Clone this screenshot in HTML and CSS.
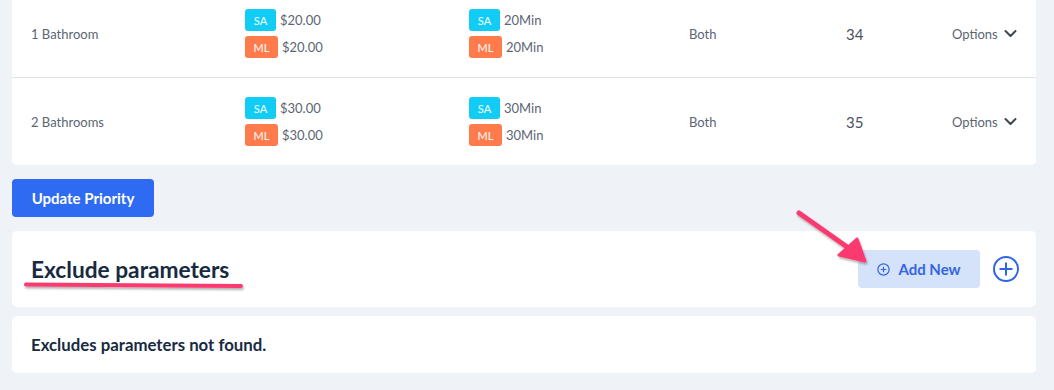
FILE: index.html
```html
<!DOCTYPE html>
<html>
<head>
    <title>Services</title>
    <link rel="stylesheet" href="styles.css">
</head>
<body>
    <div class="page">
        <div class="table-card">
            <div class="row">
                <div class="cell">1 Bathroom</div>
                <div class="cell stack">
                    <div class="tag-line"><span class="tag sa">SA</span>$20.00</div>
                    <div class="tag-line"><span class="tag ml">ML</span>$20.00</div>
                </div>
                <div class="cell stack">
                    <div class="tag-line"><span class="tag sa">SA</span>20Min</div>
                    <div class="tag-line"><span class="tag ml">ML</span>20Min</div>
                </div>
                <div class="cell">Both</div>
                <div class="cell num">34</div>
                <div class="cell options">Options
                    <svg width="13" height="9" viewBox="0 0 13 9"><path d="M1.5 2l5 5 5-5" fill="none" stroke="#3b4452" stroke-width="2" stroke-linecap="round" stroke-linejoin="round"/></svg>
                </div>
            </div>
            <div class="row">
                <div class="cell">2 Bathrooms</div>
                <div class="cell stack">
                    <div class="tag-line"><span class="tag sa">SA</span>$30.00</div>
                    <div class="tag-line"><span class="tag ml">ML</span>$30.00</div>
                </div>
                <div class="cell stack">
                    <div class="tag-line"><span class="tag sa">SA</span>30Min</div>
                    <div class="tag-line"><span class="tag ml">ML</span>30Min</div>
                </div>
                <div class="cell">Both</div>
                <div class="cell num">35</div>
                <div class="cell options">Options
                    <svg width="13" height="9" viewBox="0 0 13 9"><path d="M1.5 2l5 5 5-5" fill="none" stroke="#3b4452" stroke-width="2" stroke-linecap="round" stroke-linejoin="round"/></svg>
                </div>
            </div>
        </div>

        <div><button class="btn-primary">Update Priority</button></div>

        <div class="card header-card">
            <h2>Exclude parameters</h2>
            <div class="actions">
                <button class="btn-soft">
                    <svg width="13" height="13" viewBox="0 0 13 13"><circle cx="6.5" cy="6.5" r="5.6" fill="none" stroke="#3566e0" stroke-width="1.2"/><path d="M6.5 3.7v5.6M3.7 6.5h5.6" stroke="#3566e0" stroke-width="1.2"/></svg>
                    Add New
                </button>
                <svg class="plus-big" width="28" height="28" viewBox="0 0 28 28"><circle cx="14" cy="14" r="12" fill="none" stroke="#2f66e6" stroke-width="2"/><path d="M14 7.5v13M7.5 14h13" stroke="#2f66e6" stroke-width="2"/></svg>
            </div>
        </div>

        <div class="card empty-card">Excludes parameters not found.</div>
    </div>

    <svg class="marks" width="1054" height="390" viewBox="0 0 1054 390">
        <defs>
            <filter id="sh" x="-20%" y="-50%" width="140%" height="200%">
                <feDropShadow dx="1" dy="2" stdDeviation="1.2" flood-color="#000" flood-opacity="0.3"/>
            </filter>
        </defs>
        <g filter="url(#sh)" fill="#fb3a6f" stroke="#fb3a6f" stroke-linecap="round" stroke-linejoin="round">
            <path d="M26 284.5 L241 286" stroke-width="4" fill="none"/>
            <path d="M799 213 L850 249" stroke-width="5" fill="none"/>
            <path d="M839 255 L865 261 L857 239 Z" stroke-width="3"/>
        </g>
    </svg>
</body>
</html>
```

FILE: styles.css
```css
body {
    margin: 0;
    font-family: Lato, "Open Sans", sans-serif;
    background-color: #eff3f8;
    color: #5b6573;
}
.page {
    display: flex;
    flex-direction: column;
    gap: 14px;
    padding: 0 18px 0 12px;
    margin-top: -10px;
}
.table-card {
    background: #ffffff;
    border-radius: 0 0 5px 5px;
}
.row {
    display: grid;
    grid-template-columns: 214px 224px 220px 157px 106px 1fr;
    align-items: center;
    height: 87px;
    padding-left: 19px;
    font-size: 13px;
    border-bottom: 1px solid #dfe3ea;
}
.row:last-child {
    border-bottom: none;
}
.stack {
    display: flex;
    flex-direction: column;
    gap: 5px;
}
.tag-line {
    display: flex;
    align-items: center;
    gap: 4px;
    font-size: 13px;
}
.tag {
    display: inline-flex;
    align-items: center;
    justify-content: center;
    height: 22px;
    padding: 0 7px;
    border-radius: 3px;
    color: #ffffff;
    font-size: 11px;
}
.tag.sa {
    background: #11cdf6;
    min-width: 17px;
}
.tag.ml {
    background: #ff7b4c;
    min-width: 19px;
}
.num {
    font-size: 15px;
    color: #4a5260;
}
.options {
    display: flex;
    align-items: center;
    gap: 6px;
}
.btn-primary {
    font-family: inherit;
    background-color: #2f6bf2;
    color: #ffffff;
    font-weight: bold;
    font-size: 15px;
    height: 38px;
    width: 142px;
    border: none;
    border-radius: 4px;
}
.card {
    background: #ffffff;
    border-radius: 5px;
    padding: 0 16px 0 19px;
}
.header-card {
    display: flex;
    align-items: center;
    justify-content: space-between;
    height: 76px;
}
.header-card h2 {
    margin: 0;
    font-size: 22.7px;
    color: #172a41;
}
.actions {
    display: flex;
    align-items: center;
    gap: 12px;
}
.btn-soft {
    display: flex;
    align-items: center;
    justify-content: center;
    gap: 8px;
    font-family: inherit;
    font-size: 15px;
    font-weight: bold;
    color: #3566e0;
    background: #d4e2fa;
    border: none;
    border-radius: 4px;
    width: 122px;
    height: 38px;
}
.empty-card {
    display: flex;
    align-items: center;
    height: 57px;
    margin-top: -5px;
    font-weight: bold;
    font-size: 16.8px;
    color: #172a41;
}
.marks {
    position: absolute;
    left: 0;
    top: 0;
    pointer-events: none;
}
```
